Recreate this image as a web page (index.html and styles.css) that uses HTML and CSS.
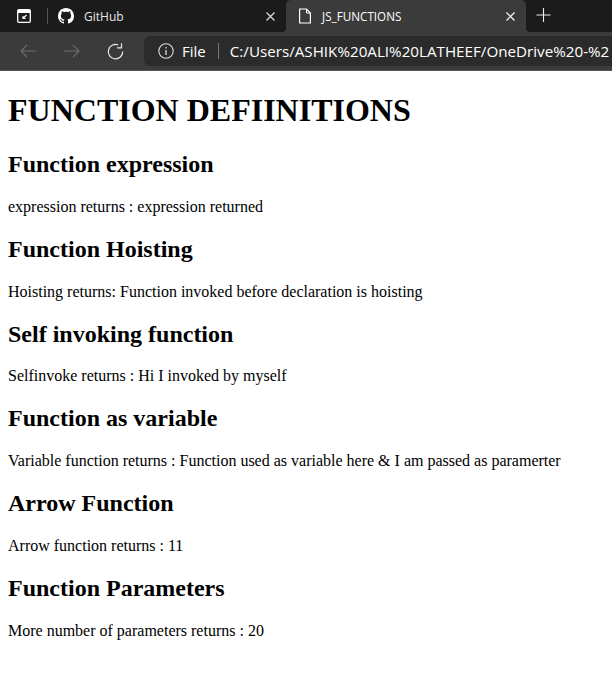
FILE: index.html
```html
<!DOCTYPE html>
<html lang="en">
<head>
    <meta charset="UTF-8">
    <meta name="viewport" content="width=device-width, initial-scale=1.0">
    <link rel="stylesheet" href="styles.css">
    <title>JS_FUNCTIONS</title>
</head>
<body>
    <div class="tab-bar">
        <svg class="tab-actions" width="14" height="14" viewBox="0 0 14 14">
            <path d="M2 .7h10A1.3 1.3 0 0 1 13.3 2v10a1.3 1.3 0 0 1-1.3 1.3H2A1.3 1.3 0 0 1 .7 12V2A1.3 1.3 0 0 1 2 .7z" fill="none" stroke="#fff" stroke-width="1.3"/>
            <path d="M.7 2A1.3 1.3 0 0 1 2 .7h10A1.3 1.3 0 0 1 13.3 2v2H.7z" fill="#fff"/>
            <path d="M9.5 6 6 9.5M6 7v2.5h2.5" fill="none" stroke="#fff" stroke-width="1.1"/>
        </svg>
        <span class="tab-divider"></span>
        <div class="tab tab-github">
            <svg class="tab-icon" width="16" height="16" viewBox="0 0 16 16">
                <path fill="#fff" d="M8 0C3.58 0 0 3.58 0 8c0 3.54 2.29 6.53 5.47 7.59.4.07.55-.17.55-.38 0-.19-.01-.82-.01-1.49-2.01.37-2.53-.49-2.69-.94-.09-.23-.48-.94-.82-1.13-.28-.15-.68-.52-.01-.53.63-.01 1.08.58 1.23.82.72 1.21 1.87.87 2.33.66.07-.52.28-.87.51-1.07-1.78-.2-3.64-.89-3.64-3.95 0-.87.31-1.59.82-2.15-.08-.2-.36-1.02.08-2.12 0 0 .67-.21 2.2.82.64-.18 1.32-.27 2-.27s1.36.09 2 .27c1.53-1.04 2.2-.82 2.2-.82.44 1.1.16 1.92.08 2.12.51.56.82 1.27.82 2.15 0 3.07-1.87 3.75-3.65 3.95.29.25.54.73.54 1.48 0 1.07-.01 1.93-.01 2.2 0 .21.15.46.55.38A8.01 8.01 0 0 0 16 8c0-4.42-3.58-8-8-8z"/>
            </svg>
            <span class="tab-title">GitHub</span>
            <svg class="tab-close" width="9" height="9" viewBox="0 0 9 9"><path d="M.5.5l8 8M8.5.5l-8 8" stroke="#ddd" stroke-width="1.2"/></svg>
        </div>
        <div class="tab tab-active">
            <svg class="tab-icon" width="14" height="16" viewBox="0 0 14 16">
                <path d="M1.6 1h6.9L12.4 5v10H1.6z" fill="none" stroke="#fff" stroke-width="1.2"/>
                <path d="M8.5 1v4h3.9" fill="none" stroke="#fff" stroke-width="1"/>
            </svg>
            <span class="tab-title">JS_FUNCTIONS</span>
            <svg class="tab-close" width="9" height="9" viewBox="0 0 9 9"><path d="M.5.5l8 8M8.5.5l-8 8" stroke="#fff" stroke-width="1.2"/></svg>
        </div>
        <svg class="new-tab" width="15" height="14" viewBox="0 0 15 14"><path d="M7.5 0v14M.5 7h14" stroke="#eee" stroke-width="1.1"/></svg>
    </div>

    <div class="toolbar">
        <svg class="nav-btn" width="17" height="14" viewBox="0 0 17 14"><path d="M16.5 7H1M7 1 1 7l6 6" fill="none" stroke="#6e6e6e" stroke-width="1.1"/></svg>
        <svg class="nav-btn forward" width="17" height="14" viewBox="0 0 17 14"><path d="M.5 7H16M10 1l6 6-6 6" fill="none" stroke="#6e6e6e" stroke-width="1.1"/></svg>
        <svg class="nav-btn reload" width="17" height="17" viewBox="0 0 17 17"><path d="M11 1.9A7.2 7.2 0 1 0 15.7 8.5" fill="none" stroke="#e8e8e8" stroke-width="1.2"/><path d="M14.5.3v4.5H10" fill="none" stroke="#e8e8e8" stroke-width="1.2"/></svg>
        <div class="address-bar">
            <svg class="info-icon" width="16" height="16" viewBox="0 0 16 16"><circle cx="8" cy="8" r="7.2" fill="none" stroke="#ddd" stroke-width="1.1"/><path d="M8 7v5M8 4v1.5" stroke="#ddd" stroke-width="1.3"/></svg>
            <span class="scheme">File</span>
            <span class="address-divider"></span>
            <span class="url">C:/Users/ASHIK%20ALI%20LATHEEF/OneDrive%20-%2</span>
        </div>
    </div>

    <div class="content">
        <h1>FUNCTION DEFIINITIONS</h1>
        <h2>Function expression</h2>
        <p>expression returns : expression returned</p>
        <h2>Function Hoisting</h2>
        <p>Hoisting returns: Function invoked before declaration is hoisting</p>
        <h2>Self invoking function</h2>
        <p>Selfinvoke returns : Hi I invoked by myself</p>
        <h2>Function as variable</h2>
        <p>Variable function returns : Function used as variable here &amp; I am passed as paramerter</p>
        <h2>Arrow Function</h2>
        <p>Arrow function returns : 11</p>
        <h2>Function Parameters</h2>
        <p>More number of parameters returns : 20</p>
    </div>
</body>
</html>
```

FILE: styles.css
```css
html, body {
    height: 100%;
}

body {
    margin: 0;
    overflow: hidden;
    background-color: #fff;
    color: #000;
    font-family: "Liberation Serif", serif;
}

.tab-bar {
    display: flex;
    align-items: center;
    height: 32px;
    background-color: #1b1b1b;
    font-family: "Open Sans", "Noto Sans", sans-serif;
    font-size: 12px;
    color: #e6e6e6;
}

.tab-actions {
    margin-left: 17px;
    flex: none;
}

.tab-divider {
    width: 1px;
    height: 16px;
    margin-left: 16px;
    background-color: #555;
}

.tab {
    display: flex;
    align-items: center;
    height: 32px;
    flex: none;
    box-sizing: border-box;
}

.tab-github {
    width: 238px;
    padding-left: 10px;
}

.tab-active {
    position: relative;
    width: 240px;
    padding-left: 12px;
    background-color: #3b3b3b;
    border-radius: 5px 5px 0 0;
    color: #fff;
}

/* little inverse corners where the active tab meets the toolbar */
.tab-active::before,
.tab-active::after {
    content: "";
    position: absolute;
    bottom: 0;
    width: 4px;
    height: 4px;
}

.tab-active::before {
    left: -4px;
    background: radial-gradient(circle at 0 0, transparent 4px, #3b3b3b 4px);
}

.tab-active::after {
    right: -4px;
    background: radial-gradient(circle at 100% 0, transparent 4px, #3b3b3b 4px);
}

.tab-title {
    margin-left: 10px;
    flex: 1;
}

.tab-active .tab-title {
    font-size: 11.7px;
}

.tab-close {
    margin-right: 11px;
    flex: none;
}

.new-tab {
    margin-left: 10px;
    margin-bottom: 2px;
    flex: none;
}

.toolbar {
    display: flex;
    align-items: center;
    box-sizing: border-box;
    height: 39px;
    background-color: #3b3b3b;
    border-bottom: 1px solid #555;
}

.nav-btn {
    margin-left: 20px;
    flex: none;
}

.forward {
    margin-left: 26px;
}

.reload {
    margin-left: 27px;
}

.address-bar {
    display: flex;
    align-items: center;
    flex: 1;
    min-width: 0;
    height: 30px;
    margin-left: 20px;
    padding-left: 14px;
    background-color: #2b2b2b;
    border-radius: 6px 0 0 6px;
    overflow: hidden;
    white-space: nowrap;
    font-family: "Open Sans", "Noto Sans", sans-serif;
    font-size: 15.2px;
    color: #fff;
}

.info-icon {
    flex: none;
}

.scheme {
    margin-left: 8px;
    font-size: 15px;
}

.address-divider {
    flex: none;
    width: 1px;
    height: 16px;
    margin: 0 11px 0 12px;
    background-color: #777;
}

.content {
    padding: 0 8px;
}

h1 {
    font-size: 2em;
    margin: 0.67em 0;
}

h2 {
    font-size: 1.5em;
    margin: 0.83em 0;
}

p {
    margin: 1em 0;
}
```
